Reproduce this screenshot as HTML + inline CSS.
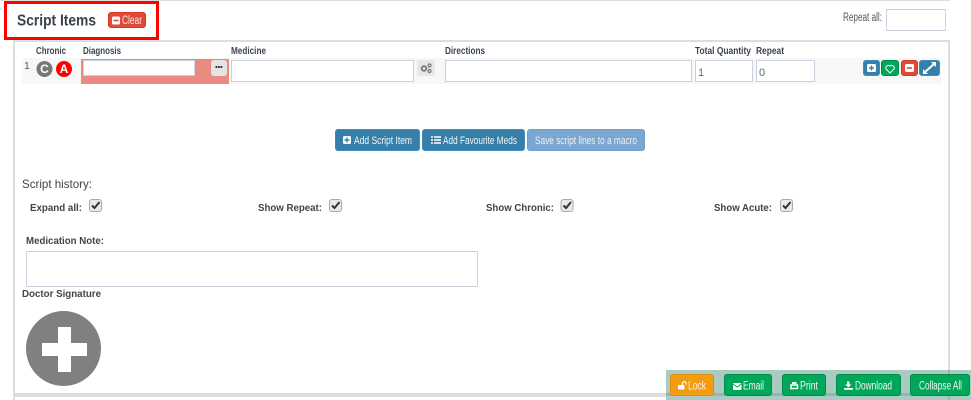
<!DOCTYPE html>
<html><head><meta charset="utf-8"><title>Script Items</title>
<style>
html,body{margin:0;padding:0;background:#fff;width:971px;height:400px;overflow:hidden}
.a{position:absolute;box-sizing:border-box}
.in{border:1px solid #ccd0dc;background:#fff}
.btn{border-radius:3px}
.blue{background:#367fa9;border:1px solid #3c8dbc}
.green{background:#00a65a;border:1px solid #008d4c}
svg{position:absolute;left:0;top:0}
text{font-family:"Liberation Sans",sans-serif}
</style></head><body>
<div class="a" style="left:0;top:0;width:950px;height:1px;background:#ddd"></div>
<div class="a" style="left:13px;top:40px;width:937px;height:360px;border:2px solid #ddd;border-bottom:0"></div>
<div class="a" style="left:13px;top:393px;width:937px;height:4px;background:#ddd"></div>
<div class="a" style="left:4px;top:1px;width:155px;height:39px;border:3px solid #f00;background:#fff"></div>
<div class="a btn" style="left:108px;top:12px;width:38px;height:16px;background:#dd4b39;border:1px solid #d73925"></div>
<div class="a" style="left:22px;top:58px;width:919px;height:26px;background:#f7f7f7"></div>
<div class="a" style="left:81px;top:59px;width:148px;height:25px;background:#e98b80"></div>
<div class="a" style="left:83px;top:60px;width:112px;height:16px;background:#fff;border:1px solid #ccd0dc"></div>
<div class="a" style="left:211px;top:60px;width:16px;height:16px;background:#e4e4e4;border-radius:3px"></div>
<div class="a in" style="left:231px;top:60px;width:183px;height:22px"></div>
<div class="a" style="left:417px;top:60px;width:18px;height:16px;background:#e7e7e7;border-radius:3px"></div>
<div class="a in" style="left:445px;top:60px;width:247px;height:22px"></div>
<div class="a in" style="left:695px;top:60px;width:58px;height:22px"></div>
<div class="a in" style="left:756px;top:60px;width:59px;height:22px"></div>
<div class="a in" style="left:886px;top:9px;width:60px;height:22px"></div>
<div class="a btn blue" style="left:863px;top:60px;width:17px;height:16px"></div>
<div class="a btn green" style="left:881px;top:60px;width:18px;height:16px"></div>
<div class="a btn" style="left:901px;top:60px;width:17px;height:16px;background:#dd4b39;border:1px solid #d73925"></div>
<div class="a btn blue" style="left:919px;top:60px;width:21px;height:16px"></div>
<div class="a btn blue" style="left:335px;top:129px;width:85px;height:22px"></div>
<div class="a btn blue" style="left:422px;top:129px;width:103px;height:22px"></div>
<div class="a btn" style="left:527px;top:129px;width:118px;height:22px;background:#7aa6cf;border:1px solid #6f9fcb"></div>
<div class="a in" style="left:26px;top:251px;width:452px;height:36px"></div>
<div class="a" style="left:26px;top:311px;width:75px;height:75px;border-radius:50%;background:#808080"></div>
<div class="a" style="left:58px;top:327px;width:13px;height:45px;background:#fff"></div>
<div class="a" style="left:42px;top:343px;width:45px;height:13px;background:#fff"></div>
<div class="a" style="left:666px;top:370px;width:305px;height:30px;background:#a9cbc1"></div>
<div class="a" style="left:666px;top:393px;width:284px;height:3px;background:#96b5ab"></div>
<div class="a" style="left:948px;top:370px;width:2px;height:30px;background:#96b5ab"></div>
<div class="a btn" style="left:670px;top:374px;width:44px;height:22px;background:#f39c12;border:1px solid #e08e0b"></div>
<div class="a btn green" style="left:724px;top:374px;width:48px;height:22px"></div>
<div class="a btn green" style="left:782px;top:374px;width:44px;height:22px"></div>
<div class="a btn green" style="left:836px;top:374px;width:65px;height:22px"></div>
<div class="a btn green" style="left:910px;top:374px;width:60px;height:22px"></div>

<svg width="971" height="400" viewBox="0 0 971 400">
<g fill="#333">
<text x="17" y="25.500" font-size="15.500" font-weight="bold" fill="#3a4149" textLength="79" lengthAdjust="spacingAndGlyphs">Script Items</text>
<g font-size="10" font-weight="bold" fill="#3d4450">
<text x="36" y="54" textLength="30" lengthAdjust="spacingAndGlyphs">Chronic</text>
<text x="83" y="54" textLength="38" lengthAdjust="spacingAndGlyphs">Diagnosis</text>
<text x="231" y="54" textLength="35" lengthAdjust="spacingAndGlyphs">Medicine</text>
<text x="445" y="54" textLength="40" lengthAdjust="spacingAndGlyphs">Directions</text>
<text x="695" y="54" textLength="56" lengthAdjust="spacingAndGlyphs">Total Quantity</text>
<text x="756" y="54" textLength="28" lengthAdjust="spacingAndGlyphs">Repeat</text>
</g>
<text x="24" y="69" font-size="10.500" fill="#555">1</text>
<text x="843" y="21" font-size="11.500" fill="#555" textLength="39" lengthAdjust="spacingAndGlyphs">Repeat all:</text>
<text x="698" y="76" font-size="11" fill="#5a6880">1</text>
<text x="759" y="76" font-size="11" fill="#5a6880">0</text>
<text x="22" y="188" font-size="12" fill="#444" textLength="70" lengthAdjust="spacingAndGlyphs">Script history:</text>
<g font-size="9.800" font-weight="bold" fill="#444">
<text x="30" y="211" textLength="52" lengthAdjust="spacingAndGlyphs">Expand all:</text>
<text x="258" y="211" textLength="64" lengthAdjust="spacingAndGlyphs">Show Repeat:</text>
<text x="486" y="211" textLength="68" lengthAdjust="spacingAndGlyphs">Show Chronic:</text>
<text x="714" y="211" textLength="58" lengthAdjust="spacingAndGlyphs">Show Acute:</text>
<text x="26" y="244" textLength="78" lengthAdjust="spacingAndGlyphs">Medication Note:</text>
<text x="22" y="297" textLength="79" lengthAdjust="spacingAndGlyphs">Doctor Signature</text>
</g>
</g>

<!-- Clear button -->
<rect x="112" y="16.500" width="8" height="8" rx="1.500" fill="#fff"/><rect x="113.500" y="19.700" width="5" height="1.600" fill="#dd4b39"/>
<text x="122" y="24" font-size="11.500" fill="#fbe6e3" textLength="20" lengthAdjust="spacingAndGlyphs">Clear</text>

<!-- C / A -->
<circle cx="44.500" cy="69" r="8" fill="#777"/>
<text x="44.500" y="73.200" text-anchor="middle" font-size="12" font-weight="bold" fill="#fff">C</text>
<circle cx="64" cy="69" r="8" fill="#f00"/>
<text x="64" y="73.200" text-anchor="middle" font-size="12" font-weight="bold" fill="#fff">A</text>

<!-- ellipsis -->
<g fill="#333"><rect x="215.500" y="66" width="1.800" height="2"/><rect x="218" y="66" width="1.800" height="2"/><rect x="220.500" y="66" width="1.800" height="2"/></g>

<!-- cogs -->
<g fill="none" stroke="#777"><circle cx="424" cy="68.500" r="2.300" stroke-width="1.800"/><circle cx="429.500" cy="65.500" r="1.500" stroke-width="1.200"/><circle cx="429.500" cy="71" r="1.500" stroke-width="1.200"/></g>

<!-- row action icons -->
<rect x="867" y="64" width="9" height="8" rx="1.500" fill="#fff"/><path d="M871.500 65.500v5M869 68h5" stroke="#367fa9" stroke-width="1.400"/>
<path d="M890 73l-3.900-3.900a2.500 2.500 0 0 1 3.900-3a2.500 2.500 0 0 1 3.900 3z" fill="none" stroke="#fff" stroke-width="1"/>
<rect x="905" y="64" width="9" height="8" rx="1.500" fill="#fff"/><rect x="907" y="67.200" width="5" height="1.600" fill="#dd4b39"/>
<path d="M931 62h5v5zM923 74v-5l5 5z" fill="#fff"/><path d="M933.500 64.500l-8 7" stroke="#fff" stroke-width="2"/>

<!-- center buttons -->
<rect x="343" y="136" width="8" height="8" rx="1.500" fill="#fff"/><path d="M347 137.500v5M344.500 140h5" stroke="#367fa9" stroke-width="1.400"/>
<text x="354" y="144" font-size="11" fill="#f2f7fa" textLength="58" lengthAdjust="spacingAndGlyphs">Add Script Item</text>
<path d="M431 137h2M434 137h7M431 140h2M434 140h7M431 143h2M434 143h7" stroke="#fff" stroke-width="1.400"/>
<text x="443" y="144" font-size="11" fill="#f2f7fa" textLength="74" lengthAdjust="spacingAndGlyphs">Add Favourite Meds</text>
<text x="535" y="144" font-size="11" fill="#eef4f9" textLength="102" lengthAdjust="spacingAndGlyphs">Save script lines to a macro</text>

<!-- checkboxes -->
<g>
<rect x="89.500" y="199.500" width="12" height="12" rx="2.500" fill="#e9e9e9" stroke="#aaa"/><path d="M92 205.500l2.500 2.500 5-6" fill="none" stroke="#333" stroke-width="2"/>
<rect x="329.500" y="199.500" width="12" height="12" rx="2.500" fill="#e9e9e9" stroke="#aaa"/><path d="M332 205.500l2.500 2.500 5-6" fill="none" stroke="#333" stroke-width="2"/>
<rect x="561" y="199.500" width="12" height="12" rx="2.500" fill="#e9e9e9" stroke="#aaa"/><path d="M563.500 205.500l2.500 2.500 5-6" fill="none" stroke="#333" stroke-width="2"/>
<rect x="780.500" y="199.500" width="12" height="12" rx="2.500" fill="#e9e9e9" stroke="#aaa"/><path d="M783 205.500l2.500 2.500 5-6" fill="none" stroke="#333" stroke-width="2"/>
</g>

<!-- footer buttons -->
<path d="M682.500 385v-1.500a1.800 1.800 0 0 1 3.600 0v1" fill="none" stroke="#fff" stroke-width="1.200"/><rect x="678" y="385" width="6.500" height="4.500" rx=".8" fill="#fff"/>
<text x="688" y="389.500" font-size="11.500" fill="#fef3e0" textLength="18" lengthAdjust="spacingAndGlyphs">Lock</text>
<rect x="733" y="383" width="8.500" height="7" rx="1" fill="#fff"/><path d="M733 384l4.250 3 4.250-3" fill="none" stroke="#00a65a" stroke-width="1"/>
<text x="743" y="389.500" font-size="11.500" fill="#effaf4" textLength="21" lengthAdjust="spacingAndGlyphs">Email</text>
<path d="M791 385h6.500v3.500h-6.500z" fill="none" stroke="#fff" stroke-width="1.500"/><rect x="792" y="382" width="4.500" height="2" fill="#fff"/>
<text x="800" y="389.500" font-size="11.500" fill="#effaf4" textLength="18" lengthAdjust="spacingAndGlyphs">Print</text>
<path d="M847 381.500h2.500v3h2l-3.200 3-3.200-3h2zM844 388h9v1.800h-9z" fill="#fff"/>
<text x="855" y="389.500" font-size="11.500" fill="#effaf4" textLength="37" lengthAdjust="spacingAndGlyphs">Download</text>
<text x="919" y="389.500" font-size="11.500" fill="#effaf4" textLength="43" lengthAdjust="spacingAndGlyphs">Collapse All</text>
</svg>
</body></html>
